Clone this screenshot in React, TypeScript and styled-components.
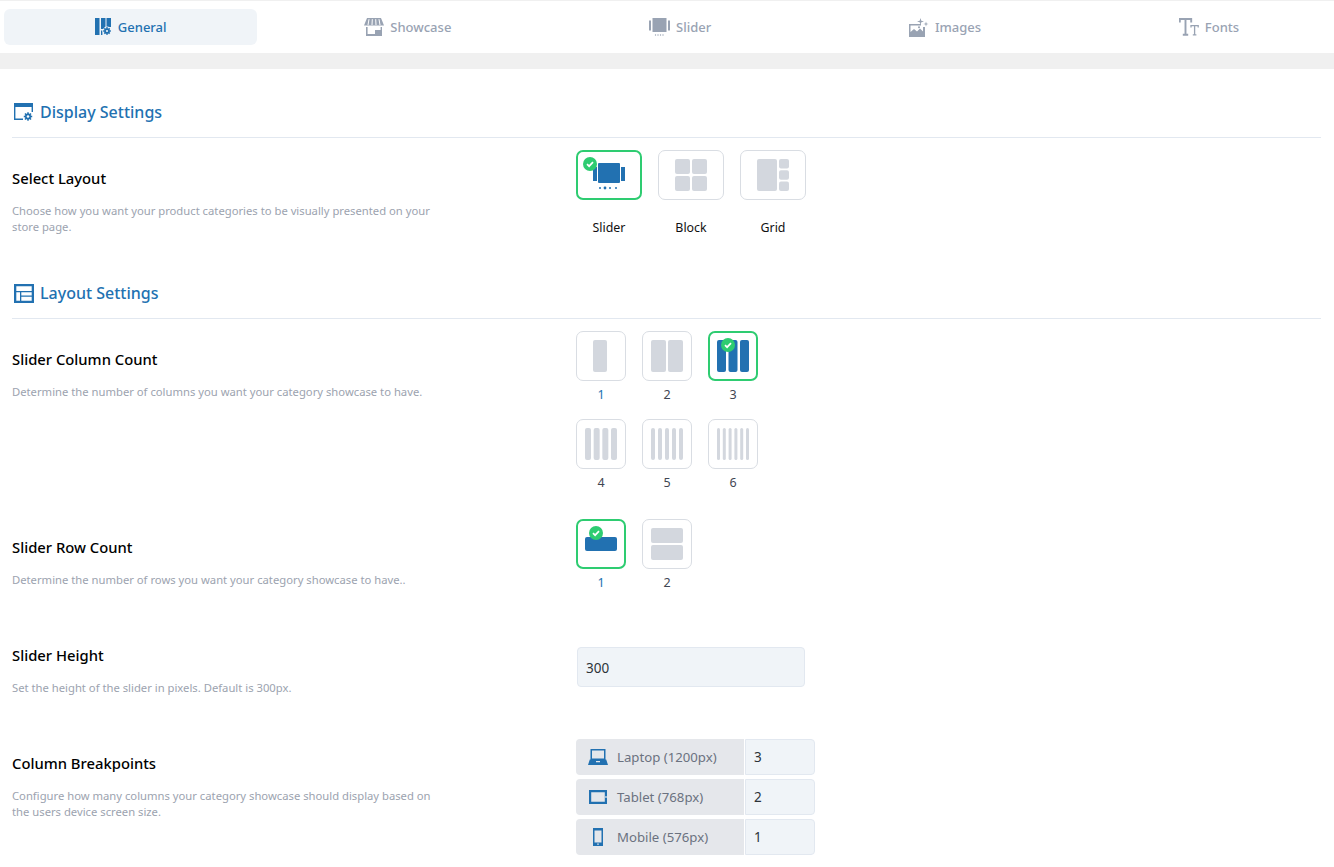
import React from "react";
import styled, { createGlobalStyle } from "styled-components";

const FONT = `"Noto Sans", "Open Sans", sans-serif`;
const BLUE = "#2271b1";
const GRAY = "#d3d7de";
const MUTED = "#99a3b3";

const Global = createGlobalStyle`
  html, body { margin: 0; padding: 0; background: #fff; }
  body { font-family: ${FONT}; overflow: hidden; }
`;

const TabBar = styled.nav`
  display: flex;
  gap: 16px;
  height: 52px;
  padding: 8px 4px;
  box-sizing: border-box;
  border-top: 1px solid #f0f0f0;
  margin-bottom: 1px;
  background: #fff;
`;
const Tab = styled.div<{ $active?: boolean }>`
  flex: 1 1 auto;
  display: flex;
  align-items: center;
  justify-content: center;
  gap: 6px;
  height: 36px;
  border-radius: 6px;
  font-size: 13px;
  font-weight: 500;
  background: ${(p) => (p.$active ? "#f0f4f8" : "transparent")};
  color: ${(p) => (p.$active ? BLUE : MUTED)};
`;
const Band = styled.div`
  height: 16px;
  background: #f0f0f0;
`;
const Section = styled.section<{ $top: number }>`
  padding: ${(p) => p.$top}px 13px 0 12px;
`;
const Heading = styled.h2`
  display: flex;
  align-items: center;
  gap: 6px;
  height: 26px;
  margin: 0 0 12px;
  padding-left: 2px;
  font-size: 16px;
  font-weight: 500;
  color: ${BLUE};
`;
const Rule = styled.hr`
  border: 0;
  border-top: 1px solid #e2e8f0;
  margin: 0 0 12px;
`;
const Row = styled.div<{ $after?: number }>`
  display: grid;
  grid-template-columns: 564px 1fr;
  margin-bottom: ${(p) => p.$after ?? 0}px;
`;
const Info = styled.div<{ $top: number }>`
  padding-top: ${(p) => p.$top}px;
`;
const Title = styled.div`
  font-size: 14.8px;
  line-height: 16px;
  font-weight: 500;
  color: #000;
`;
const Desc = styled.p`
  width: 430px;
  margin: 17px 0 0;
  font-size: 11.25px;
  line-height: 16px;
  color: #9ca3af;
`;
const Options = styled.div`
  display: flex;
  flex-wrap: wrap;
  gap: 0 16px;
  width: 182px;
`;
const WideOptions = styled.div`
  display: flex;
  gap: 16px;
`;
const Option = styled.div`
  display: flex;
  flex-direction: column;
  align-items: center;
`;
const Tile = styled.div<{ $on?: boolean; $wide?: boolean }>`
  position: relative;
  display: flex;
  align-items: center;
  justify-content: center;
  box-sizing: border-box;
  width: ${(p) => (p.$wide ? 66 : 50)}px;
  height: 50px;
  background: #fff;
  border-radius: 7px;
  border: ${(p) => (p.$on ? "2px solid #2ecc71" : "1px solid #d9dde3")};
`;
const Badge = styled.span<{ $left: number }>`
  position: absolute;
  left: ${(p) => p.$left}px;
  top: 5px;
  display: flex;
  width: 14px;
  height: 14px;
  line-height: 0;
`;
const TileLabel = styled.div<{ $on?: boolean }>`
  width: 50px;
  height: 38px;
  padding-top: 4px;
  box-sizing: border-box;
  text-align: center;
  font-size: 12.5px;
  line-height: 20px;
  color: ${(p) => (p.$on ? BLUE : "#3f4652")};
`;
const LayoutLabel = styled.div`
  padding-top: 18px;
  height: 40px;
  box-sizing: border-box;
  font-size: 12.4px;
  line-height: 20px;
  color: #111;
`;
const HeightField = styled.div`
  box-sizing: border-box;
  width: 228px;
  height: 40px;
  margin-left: 1px;
  padding: 1px 8px 0;
  display: flex;
  align-items: center;
  background: #f0f4f8;
  border: 1px solid #e2e8f0;
  border-radius: 4px;
  font-size: 13.5px;
  color: #2c3338;
`;
const Breakpoints = styled.div`
  display: flex;
  flex-direction: column;
  gap: 4px;
`;
const BreakRow = styled.div`
  display: flex;
  gap: 1px;
  height: 36px;
`;
const BreakName = styled.div`
  box-sizing: border-box;
  display: flex;
  align-items: center;
  gap: 9px;
  width: 168px;
  padding-left: 12px;
  background: #e5e7eb;
  border-radius: 4px 0 0 4px;
  font-size: 13.2px;
  color: #6b7280;
`;
const IconSlot = styled.span`
  display: flex;
  justify-content: center;
  width: 20px;
`;
const BreakValue = styled.div`
  box-sizing: border-box;
  display: flex;
  align-items: center;
  width: 70px;
  padding-left: 8px;
  background: #f0f4f8;
  border: 1px solid #e2e8f0;
  border-radius: 0 4px 4px 0;
  font-size: 13.5px;
  color: #2c3338;
`;

const Gear = ({ cx, cy, r, color, bg }: { cx: number; cy: number; r: number; color: string; bg: string }) => {
  const teeth = [0, 45, 90, 135];
  return (
    <g>
      <circle cx={cx} cy={cy} r={r + 1.8} fill={bg} />
      {teeth.map((a) => (
        <rect key={a} x={cx - 0.8} y={cy - r - 1.2} width={1.6} height={2 * r + 2.4} fill={color} transform={`rotate(${a} ${cx} ${cy})`} />
      ))}
      <circle cx={cx} cy={cy} r={r} fill={color} />
      <circle cx={cx} cy={cy} r={r * 0.42} fill={bg} />
    </g>
  );
};

const GeneralIcon = ({ c, bg }: { c: string; bg: string }) => (
  <svg width="17" height="18" viewBox="0 0 17 18">
    <rect x="0" y="0" width="4.5" height="17" fill={c} />
    <rect x="6" y="0" width="4.5" height="11" fill={c} />
    <rect x="11.5" y="0" width="4.5" height="9" fill={c} />
    <rect x="6" y="12.5" width="1.4" height="4.5" fill={c} />
    <Gear cx={12} cy={13} r={2.6} color={c} bg={bg} />
  </svg>
);
const StoreIcon = ({ c }: { c: string }) => (
  <svg width="20" height="18" viewBox="0 0 20 18">
    <path d="M3 0h14l3 7.5H0z" fill={c} />
    <path d="M5 1.2 4 7M8.3 1.2 8 7M11.7 1.2 12 7M15 1.2 16 7" stroke="#fff" strokeWidth="1" />
    <path d="M2 9h1.6v7h7.4v-4h5.6V9H18v9H2z" fill={c} />
  </svg>
);
const SliderTabIcon = ({ c }: { c: string }) => (
  <svg width="21" height="20" viewBox="0 0 21 20">
    <rect x="0" y="3.5" width="2" height="10" fill={c} />
    <rect x="3.5" y="1" width="14" height="14" fill={c} />
    <rect x="19" y="3.5" width="2" height="10" fill={c} />
    <g fill={c}>
      <circle cx="6.5" cy="18" r=".7" /><circle cx="9" cy="18" r=".7" /><circle cx="11.5" cy="18" r=".7" /><circle cx="14" cy="18" r=".7" />
    </g>
  </svg>
);
const ImagesIcon = ({ c }: { c: string }) => (
  <svg width="20" height="19" viewBox="0 0 20 19">
    <path d="M0 6h12v1.5H1.5v6.5l3.5-3 3 2.5 3-3 3 3V9H16v10H0z" fill={c} />
    <path d="M1.5 15.5 5 12l3 2.5 3-3 3.5 3.5v2.5h-13z" fill={c} />
    <circle cx="10" cy="9.3" r="1" fill={c} />
    <path d="M11.5 0l.8 2.7 2.7.8-2.7.8-.8 2.7-.8-2.7L8 3.5l2.7-.8zM17 3.5l.6 1.9 1.9.6-1.9.6-.6 1.9-.6-1.9-1.9-.6 1.9-.6z" fill={c} />
  </svg>
);
const FontsIcon = ({ c }: { c: string }) => (
  <svg width="20" height="18" viewBox="0 0 20 18" fill="none" stroke={c}>
    <path d="M.8 4.4V1h11.4v3.4M6.5 1v15.5M3.8 16.8h5.4" strokeWidth="1.9" />
    <path d="M12 9.4V7.6h7.2v1.8M15.6 7.6v9M13.8 16.8h3.6" strokeWidth="1.3" />
  </svg>
);
const DisplayIcon = () => (
  <svg width="20" height="19" viewBox="0 0 20 19">
    <rect x="0" y="0" width="19" height="4" fill={BLUE} />
    <path d="M0 3h1.4v12.6H9V17H0zM17.6 3H19v6h-1.4z" fill={BLUE} />
    <Gear cx={14} cy={13.5} r={3} color={BLUE} bg="#fff" />
  </svg>
);
const TableIcon = () => (
  <svg width="20" height="19" viewBox="0 0 20 19">
    <path
      fillRule="evenodd"
      clipRule="evenodd"
      d="M0 0h20v19H0zM2.3 2.3V7h15.4V2.3zM2.3 8.3v8.4H6V8.3zM7.3 8.3v3.2h10.4V8.3zM7.3 12.8v3.9h10.4v-3.9z"
      fill={BLUE}
    />
  </svg>
);

const Check = () => (
  <svg width="14" height="14" viewBox="0 0 14 14">
    <circle cx="7" cy="7" r="7" fill="#2ecc71" />
    <path d="M4 7.2 6.1 9.2 10 5.2" fill="none" stroke="#fff" strokeWidth="1.7" />
  </svg>
);

const LayoutSlider = () => (
  <svg width="32" height="32" viewBox="0 0 32 32">
    <rect x="0" y="8" width="4" height="14" fill={BLUE} />
    <rect x="5" y="4" width="22" height="20" rx="1" fill={BLUE} />
    <rect x="28" y="8" width="4" height="14" fill={BLUE} />
    <g fill={BLUE}>
      <circle cx="7" cy="29" r="1" /><circle cx="12" cy="29" r="1.4" /><circle cx="17" cy="29" r="1" /><circle cx="23" cy="29" r="1" />
    </g>
  </svg>
);
const LayoutBlock = () => (
  <svg width="32" height="32" viewBox="0 0 32 32">
    {[[0, 0], [17, 0], [0, 17], [17, 17]].map(([x, y]) => (
      <rect key={`${x}-${y}`} x={x} y={y} width="15" height="15" rx="2" fill={GRAY} />
    ))}
  </svg>
);
const LayoutGrid = () => (
  <svg width="32" height="32" viewBox="0 0 32 32">
    <rect x="0" y="0" width="20" height="32" rx="2" fill={GRAY} />
    {[0, 11.3, 22.6].map((y) => (
      <rect key={y} x="22" y={y} width="10" height="9.4" rx="2" fill={GRAY} />
    ))}
  </svg>
);

const colSpec: Record<number, { w: number; r: number }> = {
  1: { w: 14, r: 2 },
  2: { w: 15, r: 2 },
  3: { w: 9, r: 2 },
  4: { w: 6, r: 2 },
  5: { w: 4, r: 2 },
  6: { w: 3, r: 1.5 },
};
const ColumnsIcon = ({ n, c }: { n: number; c: string }) => {
  const { w, r } = colSpec[n];
  const step = n > 1 ? (32 - w) / (n - 1) : 0;
  const start = n === 1 ? 8 : 0;
  return (
    <svg width="32" height="32" viewBox="0 0 32 32">
      {Array.from({ length: n }, (_, i) => (
        <rect key={i} x={start + i * step} y="0" width={w} height="32" rx={r} fill={c} />
      ))}
    </svg>
  );
};
const RowsIcon = ({ n, c }: { n: number; c: string }) => (
  <svg width="32" height="32" viewBox="0 0 32 32">
    {n === 1 ? (
      <rect x="0" y="9" width="32" height="14" rx="2" fill={c} />
    ) : (
      <>
        <rect x="0" y="0" width="32" height="15" rx="2" fill={c} />
        <rect x="0" y="17" width="32" height="15" rx="2" fill={c} />
      </>
    )}
  </svg>
);

const LaptopIcon = () => (
  <svg width="20" height="16" viewBox="0 0 20 16">
    <path fillRule="evenodd" d="M2.5 0h15v11h-15zM4 1.5v8h12v-8z" fill={BLUE} />
    <path d="M1.8 10.5h16.4L20 16H0zM8 12v1.2h4V12z" fill={BLUE} fillRule="evenodd" />
  </svg>
);
const TabletIcon = () => (
  <svg width="20" height="16" viewBox="0 0 20 16">
    <path fillRule="evenodd" d="M1 1h18v14H1zM3.2 3.2v9.6h13.6V3.2z" fill={BLUE} />
    <rect x="17.4" y="7" width="1.2" height="2" fill="#e5e7eb" />
  </svg>
);
const MobileIcon = () => (
  <svg width="12" height="18" viewBox="0 0 12 18">
    <path fillRule="evenodd" d="M1 0h10v18H1zM2.5 2.5v12h7v-12z" fill={BLUE} />
    <rect x="5" y="15.6" width="2" height="1" fill="#e5e7eb" />
  </svg>
);

export default function App() {
  return (
    <>
      <Global />
      <TabBar>
        <Tab $active><GeneralIcon c={BLUE} bg="#f0f4f8" />General</Tab>
        <Tab><StoreIcon c={MUTED} />Showcase</Tab>
        <Tab><SliderTabIcon c={MUTED} />Slider</Tab>
        <Tab><ImagesIcon c={MUTED} />Images</Tab>
        <Tab><FontsIcon c={MUTED} />Fonts</Tab>
      </TabBar>
      <Band />
      <main>
        <Section $top={30}>
          <Heading><DisplayIcon />Display Settings</Heading>
          <Rule />
          <Row>
            <Info $top={20}>
              <Title>Select Layout</Title>
              <Desc>Choose how you want your product categories to be visually presented on your store page.</Desc>
            </Info>
            <WideOptions>
              <Option>
                <Tile $wide $on><LayoutSlider /><Badge $left={5}><Check /></Badge></Tile>
                <LayoutLabel>Slider</LayoutLabel>
              </Option>
              <Option>
                <Tile $wide><LayoutBlock /></Tile>
                <LayoutLabel>Block</LayoutLabel>
              </Option>
              <Option>
                <Tile $wide><LayoutGrid /></Tile>
                <LayoutLabel>Grid</LayoutLabel>
              </Option>
            </WideOptions>
          </Row>
        </Section>
        <Section $top={40}>
          <Heading><TableIcon />Layout Settings</Heading>
          <Rule />
          <Row $after={12}>
            <Info $top={20}>
              <Title>Slider Column Count</Title>
              <Desc>Determine the number of columns you want your category showcase to have.</Desc>
            </Info>
            <Options>
              {[1, 2, 3, 4, 5, 6].map((n) => (
                <Option key={n}>
                  <Tile $on={n === 3}>
                    <ColumnsIcon n={n} c={n === 3 ? BLUE : GRAY} />
                    {n === 3 && <Badge $left={11}><Check /></Badge>}
                  </Tile>
                  <TileLabel $on={n === 1}>{n}</TileLabel>
                </Option>
              ))}
            </Options>
          </Row>
          <Row $after={40}>
            <Info $top={20}>
              <Title>Slider Row Count</Title>
              <Desc>Determine the number of rows you want your category showcase to have..</Desc>
            </Info>
            <Options>
              {[1, 2].map((n) => (
                <Option key={n}>
                  <Tile $on={n === 1}>
                    <RowsIcon n={n} c={n === 1 ? BLUE : GRAY} />
                    {n === 1 && <Badge $left={11}><Check /></Badge>}
                  </Tile>
                  <TileLabel $on={n === 1}>{n}</TileLabel>
                </Option>
              ))}
            </Options>
          </Row>
          <Row $after={43}>
            <Info $top={0}>
              <Title>Slider Height</Title>
              <Desc>Set the height of the slider in pixels. Default is 300px.</Desc>
            </Info>
            <div><HeightField>300</HeightField></div>
          </Row>
          <Row>
            <Info $top={16}>
              <Title>Column Breakpoints</Title>
              <Desc>Configure how many columns your category showcase should display based on the users device screen size.</Desc>
            </Info>
            <Breakpoints>
              <BreakRow>
                <BreakName><IconSlot><LaptopIcon /></IconSlot>Laptop (1200px)</BreakName>
                <BreakValue>3</BreakValue>
              </BreakRow>
              <BreakRow>
                <BreakName><IconSlot><TabletIcon /></IconSlot>Tablet (768px)</BreakName>
                <BreakValue>2</BreakValue>
              </BreakRow>
              <BreakRow>
                <BreakName><IconSlot><MobileIcon /></IconSlot>Mobile (576px)</BreakName>
                <BreakValue>1</BreakValue>
              </BreakRow>
            </Breakpoints>
          </Row>
        </Section>
      </main>
    </>
  );
}
